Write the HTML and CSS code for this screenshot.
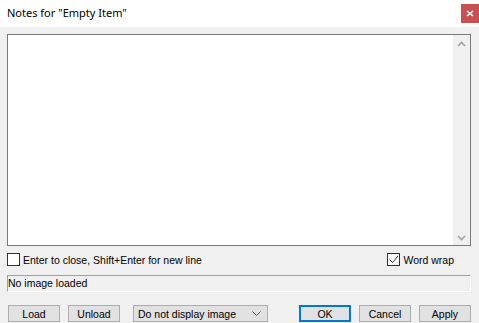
FILE: index.html
```html
<!DOCTYPE html>
<html lang="en">
<head>
    <meta charset="UTF-8">
    <title>Notes for "Empty Item"</title>
    <link rel="stylesheet" href="styles.css">
</head>
<body>
    <div class="titlebar">
        <span class="title">Notes for "Empty Item"</span>
        <div class="close">
            <svg width="8" height="7" viewBox="0 0 8 7"><path d="M1 1 L7 6 M7 1 L1 6" stroke="#fff" stroke-width="1.6"/></svg>
        </div>
    </div>
    <div class="main">
        <div class="editor">
            <div class="text"></div>
            <div class="scrollbar">
                <svg width="9" height="6" viewBox="0 0 9 6"><path d="M1 5 L4.5 1.5 L8 5" stroke="#a3a3a3" stroke-width="1.6" fill="none"/></svg>
                <svg width="9" height="6" viewBox="0 0 9 6"><path d="M1 1 L4.5 4.5 L8 1" stroke="#a3a3a3" stroke-width="1.6" fill="none"/></svg>
            </div>
        </div>
        <div class="options">
            <label class="check"><span class="box"></span>Enter to close, Shift+Enter for new line</label>
            <label class="check">
                <span class="box">
                    <svg width="11" height="11" viewBox="0 0 11 11"><path d="M1.5 5.5 L4.5 8.5 L10 2" stroke="#333" stroke-width="1" fill="none"/></svg>
                </span>Word wrap</label>
        </div>
        <div class="status">No image loaded</div>
        <div class="buttons">
            <div class="left">
                <button class="btn">Load</button>
                <button class="btn">Unload</button>
                <div class="select">
                    <span>Do not display image</span>
                    <svg width="9" height="5" viewBox="0 0 9 5"><path d="M0.5 0.5 L4.5 4.5 L8.5 0.5" stroke="#555" stroke-width="1" fill="none"/></svg>
                </div>
            </div>
            <div class="right">
                <button class="btn default">OK</button>
                <button class="btn">Cancel</button>
                <button class="btn">Apply</button>
            </div>
        </div>
    </div>
</body>
</html>
```

FILE: styles.css
```css
* {
    box-sizing: border-box;
}
body {
    margin: 0;
    width: 479px;
    height: 323px;
    background: #f0f0f0;
    font-family: 'Liberation Sans', Arial, sans-serif;
    font-size: 10.5px;
    color: #000;
    overflow: hidden;
}
.titlebar {
    height: 27px;
    background: #fff;
    display: flex;
    justify-content: space-between;
    align-items: flex-start;
}
.title {
    font-family: 'Noto Sans', 'Open Sans', sans-serif;
    font-size: 11px;
    padding: 5px 0 0 7px;
    color: #000;
}
.close {
    width: 18px;
    height: 19px;
    margin-top: 4px;
    background: #c75050;
    display: flex;
    align-items: center;
    justify-content: center;
}
.main {
    padding: 7px 8px 0 7px;
}
.editor {
    height: 212px;
    border: 1px solid #7a7a7a;
    background: #fff;
    display: flex;
}
.text {
    flex: 1;
}
.scrollbar {
    width: 17px;
    background: #f0f0f0;
    display: flex;
    flex-direction: column;
    justify-content: space-between;
    align-items: center;
    padding: 6px 0 4px;
}
.options {
    margin-top: 7px;
    height: 13px;
    display: flex;
    justify-content: space-between;
    padding-right: 17px;
}
.check {
    display: flex;
    align-items: center;
    gap: 3px;
}
.box {
    width: 13px;
    height: 13px;
    border: 1px solid #333;
    background: #fff;
    display: flex;
    align-items: center;
    justify-content: center;
}
.status {
    margin-top: 9px;
    height: 17px;
    border-top: 1px solid #a0a0a0;
    border-left: 1px solid #a0a0a0;
    border-bottom: 1px solid #fff;
    border-right: 1px solid #fff;
    padding: 1px 0 0 0;
    line-height: 13px;
}
.buttons {
    margin-top: 13px;
    display: flex;
    justify-content: space-between;
    padding-left: 1px;
}
.left, .right {
    display: flex;
}
.btn {
    width: 52px;
    height: 17px;
    padding: 0;
    border: 1px solid #adadad;
    background: #e1e1e1;
    font-family: inherit;
    font-size: 10.5px;
    color: #000;
    margin-right: 8px;
}
.left .btn + .btn {
    margin-right: 13px;
}
.right .btn:last-child {
    margin-right: 0;
}
.btn.default {
    border: 2px solid #0078d7;
}
.select {
    width: 135px;
    height: 17px;
    border: 1px solid #adadad;
    background: #e1e1e1;
    display: flex;
    align-items: center;
    justify-content: space-between;
    padding: 0 6px 0 4px;
}
```
